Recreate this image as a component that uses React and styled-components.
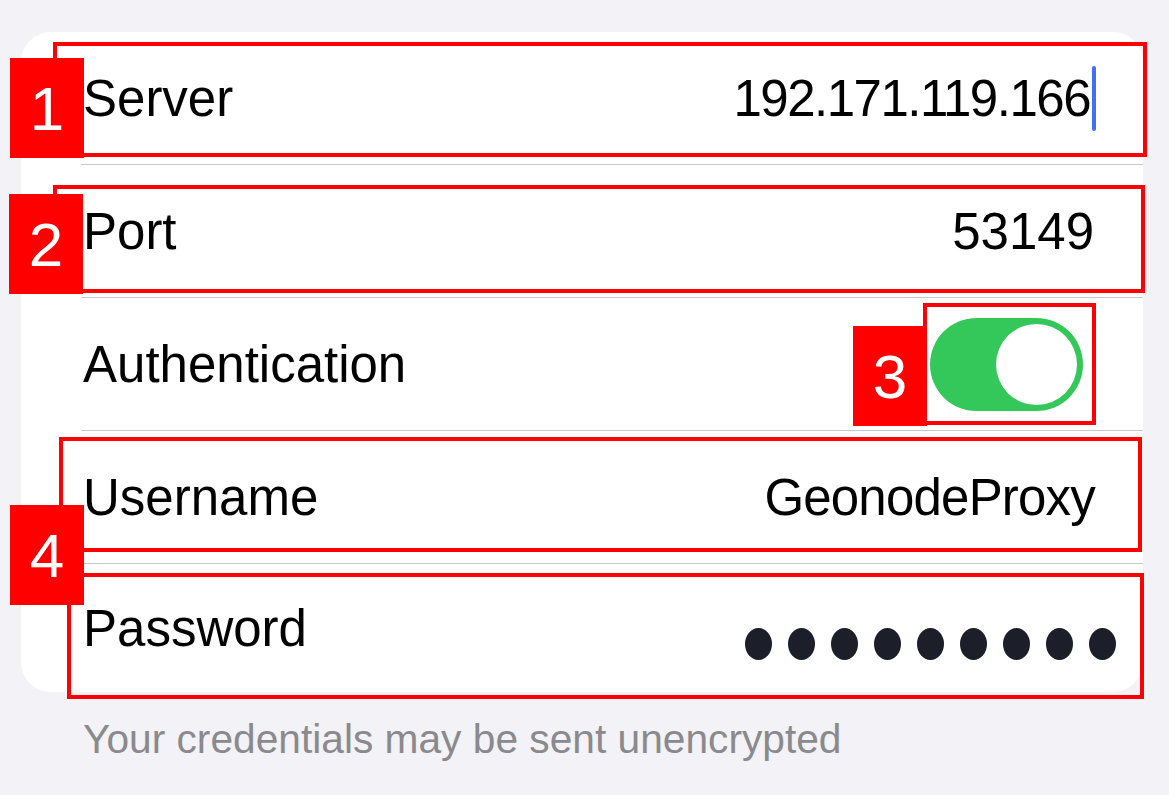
import React from 'react';
import styled, { createGlobalStyle } from 'styled-components';

const GlobalStyle = createGlobalStyle`
  html, body {
    margin: 0;
    padding: 0;
    background: #f2f2f7;
    font-family: 'Liberation Sans', Arial, sans-serif;
  }
`;

const Page = styled.div`
  position: relative;
  width: 1169px;
  height: 795px;
  padding: 32px 0 0 21px;
  box-sizing: border-box;
  overflow: hidden;
`;

const Card = styled.div`
  width: 1122px;
  background: #fff;
  border-radius: 30px;
  overflow: hidden;
`;

const Row = styled.div`
  padding-left: 60px;
`;

const RowInner = styled.div`
  display: flex;
  align-items: center;
  justify-content: space-between;
  box-sizing: border-box;
  height: ${(p) => (p.last ? 128 : 133)}px;
  padding-right: ${(p) => p.pr ?? 49}px;
  border-bottom: ${(p) => (p.last ? 'none' : '1px solid #c8c7cc')};
`;

const Label = styled.span`
  font-size: 51px;
  color: #000;
  padding-left: 2px;
`;

const Value = styled.span`
  display: flex;
  align-items: center;
  font-size: 51px;
  color: #000;
  letter-spacing: ${(p) => p.tight || 0}px;
`;

const Caret = styled.span`
  display: inline-block;
  width: 4px;
  height: 65px;
  border-radius: 2px;
  background: #4170f0;
  margin-left: 2px;
`;

const Switch = styled.div`
  width: 153px;
  height: 93px;
  border-radius: 47px;
  background: #34c759;
  display: flex;
  align-items: center;
  justify-content: flex-end;
  padding: 0 6px;
  box-sizing: border-box;
  margin-right: 12px;
`;

const Knob = styled.div`
  width: 81px;
  height: 81px;
  border-radius: 50%;
  background: #fff;
`;

const Dots = styled.div`
  display: flex;
  gap: 16px;
  margin-top: 32px;
  margin-right: -22px;
`;

const Dot = styled.span`
  width: 27px;
  height: 32px;
  border-radius: 50%;
  background: #1c1f2a;
`;

const Footer = styled.div`
  margin-top: 23px;
  padding-left: 62px;
  font-size: 40.7px;
  line-height: 48px;
  color: #8a8a8e;
`;

const Box = styled.div`
  position: absolute;
  box-sizing: border-box;
  border: 4px solid #ff0000;
  pointer-events: none;
`;

const Tag = styled.div`
  position: absolute;
  width: 74px;
  height: 100px;
  background: #ff0000;
  color: #fff;
  font-size: 62px;
  display: flex;
  align-items: center;
  justify-content: center;
`;

const boxes = [
  { l: 53, t: 42, r: 1147, b: 157 },
  { l: 53, t: 185, r: 1145, b: 293 },
  { l: 923, t: 303, r: 1096, b: 425 },
  { l: 59, t: 437, r: 1142, b: 552 },
  { l: 67, t: 573, r: 1144, b: 699 },
];

const tags = [
  { n: 1, l: 10, t: 58 },
  { n: 2, l: 9, t: 194 },
  { n: 3, l: 853, t: 326 },
  { n: 4, l: 10, t: 505 },
];

export default function App() {
  return (
    <>
      <GlobalStyle />
      <Page>
        <Card>
          <Row>
            <RowInner pr={47}>
              <Label>Server</Label>
              <Value tight={-1.5}>
                192.171.119.166
                <Caret />
              </Value>
            </RowInner>
          </Row>
          <Row>
            <RowInner>
              <Label>Port</Label>
              <Value>53149</Value>
            </RowInner>
          </Row>
          <Row>
            <RowInner pr={48}>
              <Label>Authentication</Label>
              <Switch>
                <Knob />
              </Switch>
            </RowInner>
          </Row>
          <Row>
            <RowInner pr={48}>
              <Label>Username</Label>
              <Value tight={-0.8}>GeonodeProxy</Value>
            </RowInner>
          </Row>
          <Row>
            <RowInner last>
              <Label>Password</Label>
              <Dots>
                {Array.from({ length: 9 }).map((_, i) => (
                  <Dot key={i} />
                ))}
              </Dots>
            </RowInner>
          </Row>
        </Card>
        <Footer>Your credentials may be sent unencrypted</Footer>

        {boxes.map((b, i) => (
          <Box
            key={i}
            style={{ left: b.l, top: b.t, width: b.r - b.l, height: b.b - b.t }}
          />
        ))}
        {tags.map((t) => (
          <Tag key={t.n} style={{ left: t.l, top: t.t }}>
            {t.n}
          </Tag>
        ))}
      </Page>
    </>
  );
}
